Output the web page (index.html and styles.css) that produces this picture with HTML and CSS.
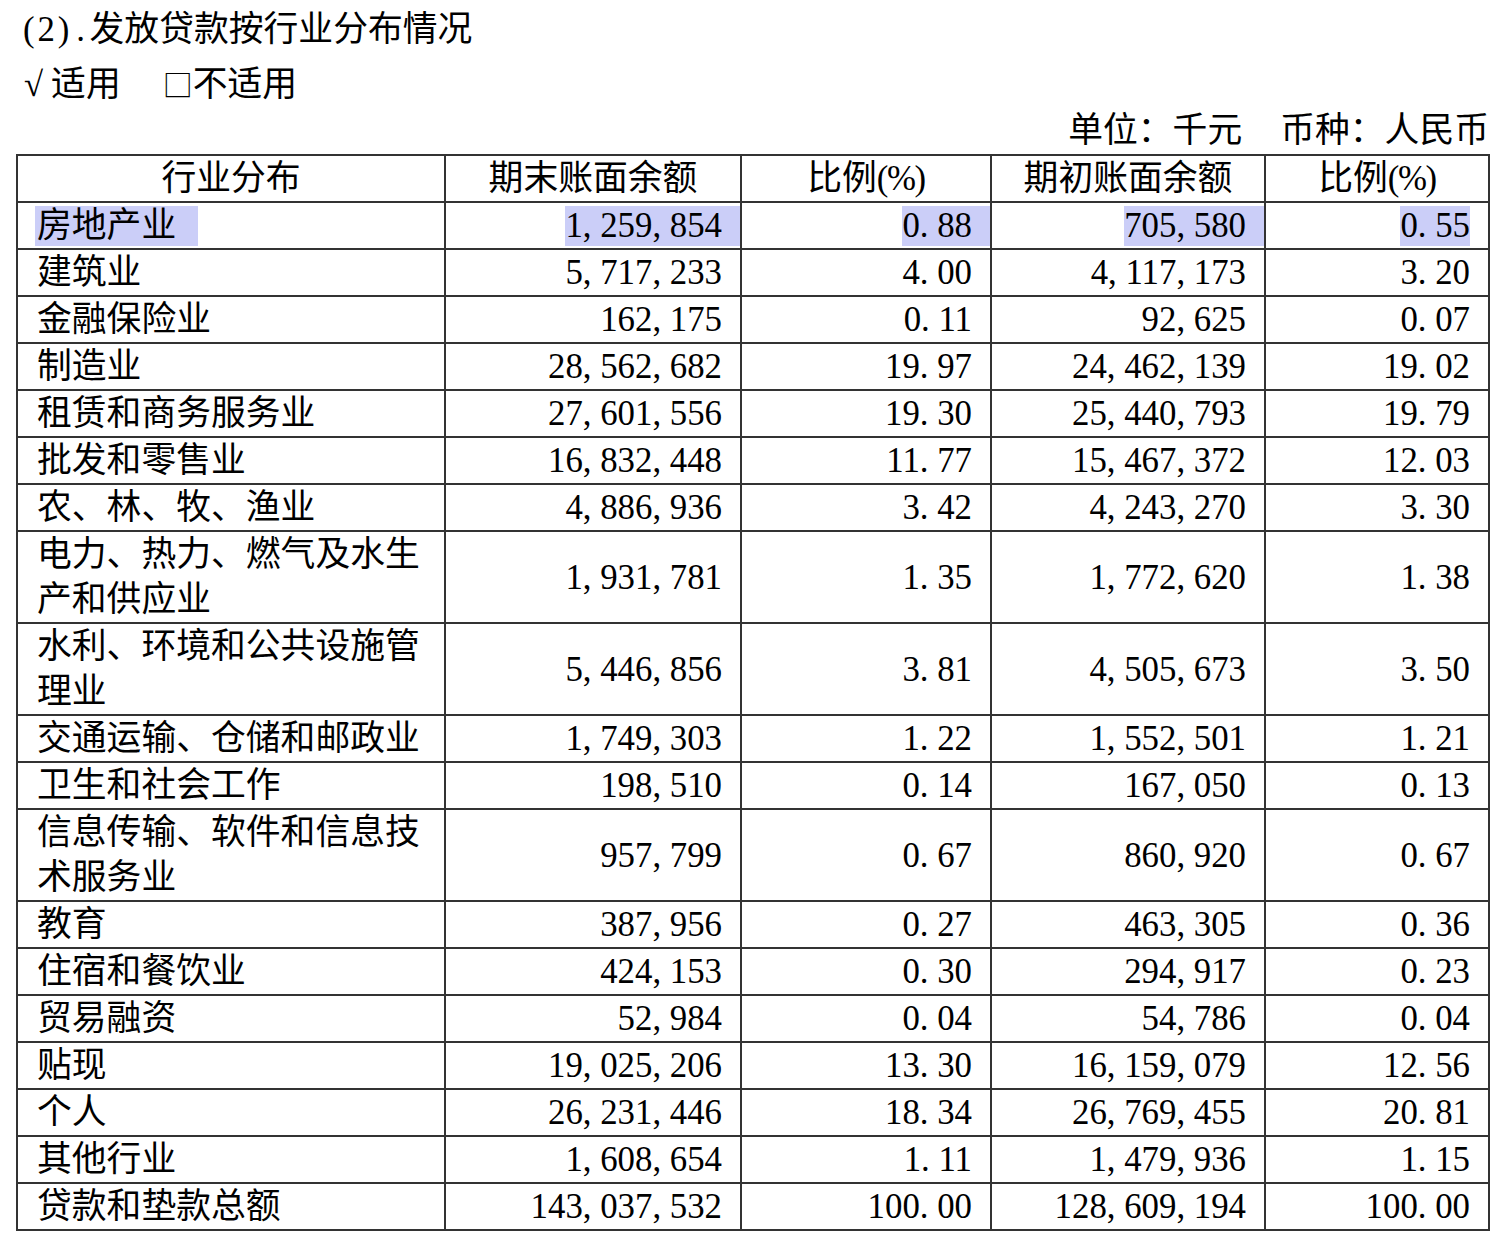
FILE: index.html
```html
<!DOCTYPE html>
<html lang="zh-CN">
<head>
<meta charset="utf-8">
<title>发放贷款按行业分布情况</title>
<link rel="stylesheet" href="styles.css">
</head>
<body>
<div class="page">
  <div class="title"><span class="pw">(</span><span class="dg">2</span><span class="pw">)</span><span class="dt">.</span>发放贷款按行业分布情况</div>
  <div class="apply"><span class="mark">√</span>适用<span class="gap"></span><span class="box">□</span>不适用</div>
  <div class="unit">单位：千元<span class="gap2"></span>币种：人民币</div>
  <table class="loan">
    <colgroup>
      <col class="c1"><col class="c2"><col class="c3"><col class="c4"><col class="c5">
    </colgroup>
    <thead>
      <tr><th>行业分布</th><th>期末账面余额</th><th>比例<span class="pct">(%)</span></th><th>期初账面余额</th><th>比例<span class="pct">(%)</span></th></tr>
    </thead>
    <tbody>
      <tr><td class="name"><span class="hl hl-name">房地产业</span></td><td class="num"><span class="hl hl-num">1<span class="s">,</span>259<span class="s">,</span>854</span></td><td class="num"><span class="hl hl-num">0<span class="s">.</span>88</span></td><td class="num"><span class="hl hl-num">705<span class="s">,</span>580</span></td><td class="num"><span class="hl">0<span class="s">.</span>55</span></td></tr>
      <tr><td class="name">建筑业</td><td class="num">5<span class="s">,</span>717<span class="s">,</span>233</td><td class="num">4<span class="s">.</span>00</td><td class="num">4<span class="s">,</span>117<span class="s">,</span>173</td><td class="num">3<span class="s">.</span>20</td></tr>
      <tr><td class="name">金融保险业</td><td class="num">162<span class="s">,</span>175</td><td class="num">0<span class="s">.</span>11</td><td class="num">92<span class="s">,</span>625</td><td class="num">0<span class="s">.</span>07</td></tr>
      <tr><td class="name">制造业</td><td class="num">28<span class="s">,</span>562<span class="s">,</span>682</td><td class="num">19<span class="s">.</span>97</td><td class="num">24<span class="s">,</span>462<span class="s">,</span>139</td><td class="num">19<span class="s">.</span>02</td></tr>
      <tr><td class="name">租赁和商务服务业</td><td class="num">27<span class="s">,</span>601<span class="s">,</span>556</td><td class="num">19<span class="s">.</span>30</td><td class="num">25<span class="s">,</span>440<span class="s">,</span>793</td><td class="num">19<span class="s">.</span>79</td></tr>
      <tr><td class="name">批发和零售业</td><td class="num">16<span class="s">,</span>832<span class="s">,</span>448</td><td class="num">11<span class="s">.</span>77</td><td class="num">15<span class="s">,</span>467<span class="s">,</span>372</td><td class="num">12<span class="s">.</span>03</td></tr>
      <tr><td class="name">农、林、牧、渔业</td><td class="num">4<span class="s">,</span>886<span class="s">,</span>936</td><td class="num">3<span class="s">.</span>42</td><td class="num">4<span class="s">,</span>243<span class="s">,</span>270</td><td class="num">3<span class="s">.</span>30</td></tr>
      <tr><td class="name">电力、热力、燃气及水生产和供应业</td><td class="num">1<span class="s">,</span>931<span class="s">,</span>781</td><td class="num">1<span class="s">.</span>35</td><td class="num">1<span class="s">,</span>772<span class="s">,</span>620</td><td class="num">1<span class="s">.</span>38</td></tr>
      <tr><td class="name">水利、环境和公共设施管理业</td><td class="num">5<span class="s">,</span>446<span class="s">,</span>856</td><td class="num">3<span class="s">.</span>81</td><td class="num">4<span class="s">,</span>505<span class="s">,</span>673</td><td class="num">3<span class="s">.</span>50</td></tr>
      <tr><td class="name">交通运输、仓储和邮政业</td><td class="num">1<span class="s">,</span>749<span class="s">,</span>303</td><td class="num">1<span class="s">.</span>22</td><td class="num">1<span class="s">,</span>552<span class="s">,</span>501</td><td class="num">1<span class="s">.</span>21</td></tr>
      <tr><td class="name">卫生和社会工作</td><td class="num">198<span class="s">,</span>510</td><td class="num">0<span class="s">.</span>14</td><td class="num">167<span class="s">,</span>050</td><td class="num">0<span class="s">.</span>13</td></tr>
      <tr><td class="name">信息传输、软件和信息技术服务业</td><td class="num">957<span class="s">,</span>799</td><td class="num">0<span class="s">.</span>67</td><td class="num">860<span class="s">,</span>920</td><td class="num">0<span class="s">.</span>67</td></tr>
      <tr><td class="name">教育</td><td class="num">387<span class="s">,</span>956</td><td class="num">0<span class="s">.</span>27</td><td class="num">463<span class="s">,</span>305</td><td class="num">0<span class="s">.</span>36</td></tr>
      <tr><td class="name">住宿和餐饮业</td><td class="num">424<span class="s">,</span>153</td><td class="num">0<span class="s">.</span>30</td><td class="num">294<span class="s">,</span>917</td><td class="num">0<span class="s">.</span>23</td></tr>
      <tr><td class="name">贸易融资</td><td class="num">52<span class="s">,</span>984</td><td class="num">0<span class="s">.</span>04</td><td class="num">54<span class="s">,</span>786</td><td class="num">0<span class="s">.</span>04</td></tr>
      <tr><td class="name">贴现</td><td class="num">19<span class="s">,</span>025<span class="s">,</span>206</td><td class="num">13<span class="s">.</span>30</td><td class="num">16<span class="s">,</span>159<span class="s">,</span>079</td><td class="num">12<span class="s">.</span>56</td></tr>
      <tr><td class="name">个人</td><td class="num">26<span class="s">,</span>231<span class="s">,</span>446</td><td class="num">18<span class="s">.</span>34</td><td class="num">26<span class="s">,</span>769<span class="s">,</span>455</td><td class="num">20<span class="s">.</span>81</td></tr>
      <tr><td class="name">其他行业</td><td class="num">1<span class="s">,</span>608<span class="s">,</span>654</td><td class="num">1<span class="s">.</span>11</td><td class="num">1<span class="s">,</span>479<span class="s">,</span>936</td><td class="num">1<span class="s">.</span>15</td></tr>
      <tr><td class="name">贷款和垫款总额</td><td class="num">143<span class="s">,</span>037<span class="s">,</span>532</td><td class="num">100<span class="s">.</span>00</td><td class="num">128<span class="s">,</span>609<span class="s">,</span>194</td><td class="num">100<span class="s">.</span>00</td></tr>
    </tbody>
  </table>
</div>
</body>
</html>
```
FILE: styles.css
```css
html, body {
  margin: 0;
  padding: 0;
  background: #ffffff;
}

body {
  font-family: "Liberation Serif", "Noto Sans CJK SC", serif;
  font-size: 34.8px;
  color: #000000;
}

.page {
  padding: 7px 0 0 16px;
  width: 1474px;
}

.title {
  line-height: 46px;
  padding-left: 4px;
  margin-bottom: 9px;
  white-space: nowrap;
}

.pw {
  display: inline-block;
  width: 0.5em;
  text-align: center;
}

.dg {
  display: inline-block;
  width: 0.5em;
  text-align: center;
}

.dt {
  display: inline-block;
  width: 0.5em;
  text-align: left;
  padding-left: 4px;
  box-sizing: border-box;
}

.apply {
  line-height: 46px;
  padding-left: 8px;
  white-space: nowrap;
  display: flex;
  align-items: center;
}

.mark {
  margin-right: 8px;
}

.gap {
  display: inline-block;
  width: 42px;
}

.box {
  font-family: "Noto Sans CJK SC", sans-serif;
  font-size: 30px;
  display: inline-block;
  width: 30px;
  text-align: left;
  position: relative;
  top: -2px;
}

.unit {
  line-height: 46px;
  text-align: right;
  padding-right: 1px;
  white-space: nowrap;
}

.gap2 {
  display: inline-block;
  width: 38px;
}

.loan {
  border-collapse: collapse;
  table-layout: fixed;
  width: 1472px;
}

.c1 { width: 428px; }
.c2 { width: 296px; }
.c3 { width: 250px; }
.c4 { width: 274px; }
.c5 { width: 224px; }

.loan th,
.loan td {
  border: 2px solid #333333;
  padding: 0;
  line-height: 45px;
  font-weight: normal;
  vertical-align: middle;
}

.loan th {
  text-align: center;
}

.pct {
  letter-spacing: -0.04em;
}

.loan td.name {
  padding: 0 18px 0 19px;
  text-align: left;
}

.loan td.num {
  text-align: right;
  padding-right: 18px;
  white-space: nowrap;
}

.s {
  letter-spacing: 0.25em;
}

.hl {
  background: #cbcef8;
  display: inline-block;
  line-height: 40px;
}

.hl-name {
  padding-right: 22px;
  margin-left: -2px;
  padding-left: 2px;
}

.hl-num {
  margin-right: -18px;
  padding-right: 18px;
}
```
